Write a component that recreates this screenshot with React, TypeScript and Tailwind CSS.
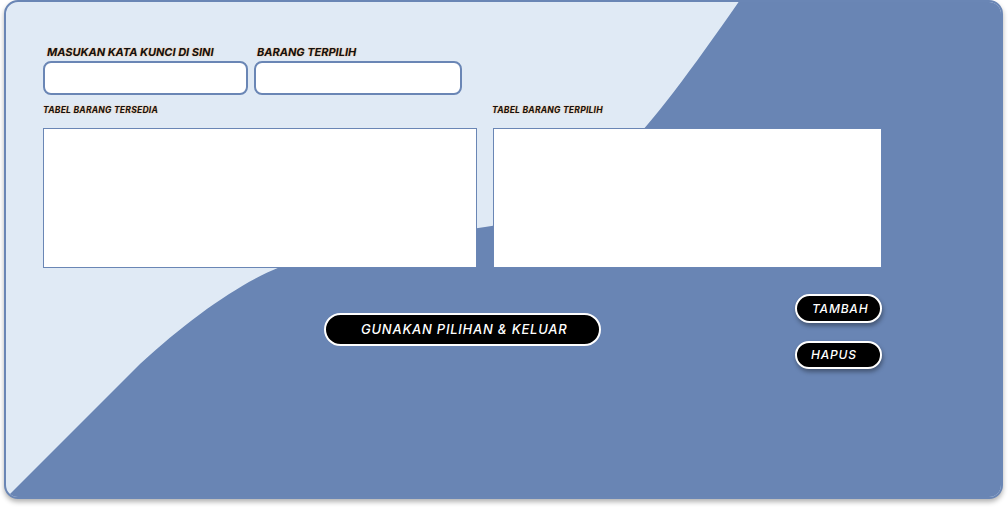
import React from 'react';

const labelCls =
  "font-bold italic text-[#111] [text-shadow:0_0_2px_#f3c7a1,0_0_1px_#f3c7a1]";

function PillButton({ label, className }: { label: string; className?: string }) {
  return (
    <button
      className={
        "rounded-full border-2 border-white bg-black text-white italic font-medium text-left " +
        (className ?? "")
      }
    >
      {label}
    </button>
  );
}

export default function App() {
  return (
    <div className="w-[1008px] h-[508px] pl-[4px] font-['Inter','Noto_Sans',sans-serif]">
      <div className="relative w-[999px] h-[499px] overflow-hidden rounded-[14px] border-2 border-[#6a86b5] bg-[#e0eaf5] shadow-[0_3px_5px_rgba(0,0,0,0.3)]">
        {/* background wave */}
        <svg
          className="absolute left-[-6px] top-[-2px]"
          width={1008}
          height={508}
          viewBox="0 0 1008 508"
        >
          <path
            d="M740,-2 L740,0 C637,148 585,212 485,227 C420,236 330,245 280,267 C240,283 190,318 140,364 L-4,508 L1010,508 L1010,-2 Z"
            fill="#6985b4"
          />
        </svg>

        <div className="relative w-[876px] pl-[37px] pt-[43px]">
          {/* search inputs */}
          <div className="flex gap-[6px]">
            <div className="flex flex-col">
              <span className={labelCls + " text-[11px] leading-[14px] pl-[4px] mb-[2px]"}>
                MASUKAN KATA KUNCI DI SINI
              </span>
              <input className="w-[205px] h-[34px] rounded-[8px] border-2 border-[#6a86b5] bg-white outline-none" />
            </div>
            <div className="flex flex-col">
              <span className={labelCls + " text-[11px] leading-[14px] pl-[3px] mb-[2px]"}>
                BARANG TERPILIH
              </span>
              <input className="w-[208px] h-[34px] rounded-[8px] border-2 border-[#6a86b5] bg-white outline-none" />
            </div>
          </div>

          {/* tables */}
          <div className="flex gap-[16px] mt-[10px]">
            <div className="flex flex-col">
              <span className={labelCls + " text-[8.5px] leading-[10px] tracking-[0.25px] mb-[13px]"}>
                TABEL BARANG TERSEDIA
              </span>
              <div className="w-[434px] h-[140px] border border-[#6a86b5] bg-white" />
            </div>
            <div className="flex flex-col">
              <span className={labelCls + " text-[8.5px] leading-[10px] tracking-[0.25px] mb-[13px] -ml-[1px]"}>
                TABEL BARANG TERPILIH
              </span>
              <div className="w-[389px] h-[140px] border border-[#6a86b5] bg-white" />
            </div>
          </div>

          {/* actions */}
          <div className="flex items-start">
            <PillButton
              label="GUNAKAN PILIHAN & KELUAR"
              className="ml-[281px] mt-[45px] w-[277px] h-[33px] pl-[35px] text-[13px] tracking-[0.75px]"
            />
            <div className="ml-auto mt-[26px] flex flex-col gap-[18px]">
              <PillButton
                label="TAMBAH"
                className="w-[87px] h-[29px] pl-[15px] text-[12px] tracking-[0.8px] shadow-[1px_3px_4px_rgba(0,0,0,0.35)]"
              />
              <PillButton
                label="HAPUS"
                className="w-[87px] h-[28px] pl-[14px] text-[12px] tracking-[0.8px] shadow-[1px_3px_4px_rgba(0,0,0,0.35)]"
              />
            </div>
          </div>
        </div>
      </div>
    </div>
  );
}
